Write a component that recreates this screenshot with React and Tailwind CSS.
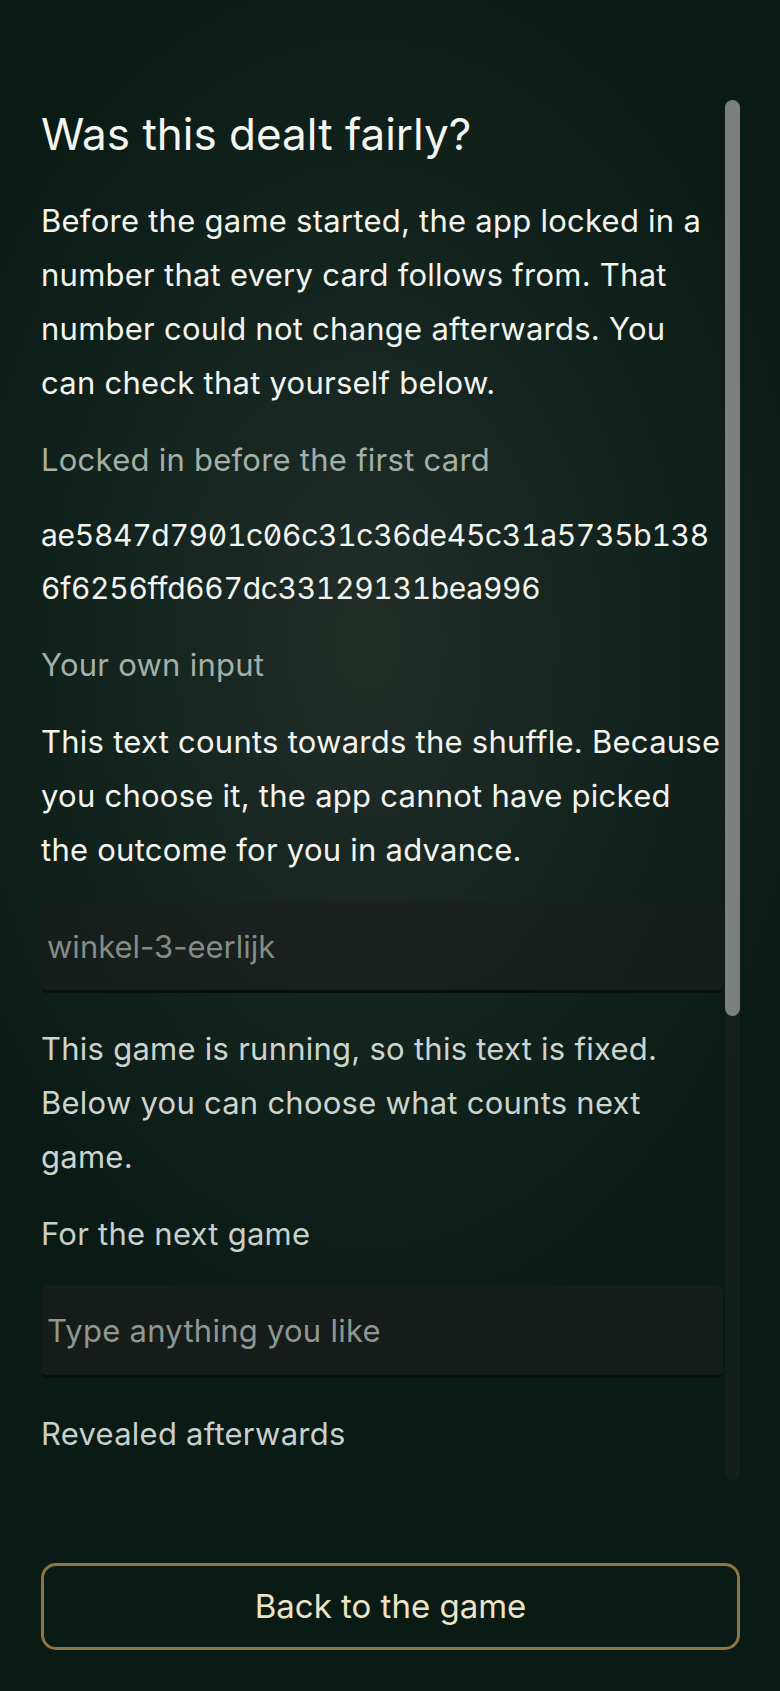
import { useState } from 'react';

const COMMIT = 'ae5847d7901c06c31c36de45c31a5735b1386f6256ffd667dc33129131bea996';

// body copy is a touch wider than plain Inter 30px
const body = 'text-[31px] tracking-[0.25px] leading-[54px]';

export default function App() {
  const [nextSeed, setNextSeed] = useState('');

  return (
    <div className="min-h-screen w-full bg-[#08190f] bg-[radial-gradient(ellipse_60%_42%_at_47%_38%,#232d28_0%,#152520_45%,#0a1a14_100%)] font-['Inter','Noto_Sans',sans-serif] antialiased">
      <div className="pt-[100px] pl-[41px] pr-[40px]">
        <div className="flex h-[1380px] gap-[2px]">
          <div className="flex-1 overflow-hidden">
            <h1 className="mt-[8px] text-[44px] leading-[53px] font-normal text-[#f4f5f0]">Was this dealt fairly?</h1>

            <p className={`mt-[33px] ${body} text-[#f3f4ef]`}>
              Before the game started, the app locked in a number that every card follows from. That number could not change afterwards. You can check that yourself below.
            </p>

            <Label className="mt-[23px]">Locked in before the first card</Label>
            <div className="mt-[22px] max-w-[672px] text-[30px] leading-[53px] tracking-[-0.3px] text-[#f3f4ef] break-all tabular-nums slashed-zero [font-feature-settings:'zero','tnum']">
              {COMMIT}
            </div>

            <Label className="mt-[23px]">Your own input</Label>
            <p className={`mt-[23px] ${body} text-[#f3f4ef]`}>
              This text counts towards the shuffle. Because you choose it, the app cannot have picked the outcome for you in advance.
            </p>

            <input
              readOnly
              value="winkel-3-eerlijk"
              className="mt-[25px] block h-[91px] w-full rounded-[6px] border-b-[3px] border-[#0b100d] bg-[rgba(30,30,30,0.55)] pl-[6px] text-[31px] text-[#838d88] outline-none"
            />

            <p className={`mt-[29px] max-w-[640px] ${body} text-[#cdd4cf]`}>
              This game is running, so this text is fixed. Below you can choose what counts next game.
            </p>

            <div className={`mt-[23px] ${body} text-[#c8d0cb]`}>For the next game</div>
            <input
              value={nextSeed}
              onChange={(e) => setNextSeed(e.target.value)}
              placeholder="Type anything you like"
              className="mt-[24px] block h-[93px] w-full rounded-[6px] border-b-[3px] border-[#0b0e0c] bg-[rgba(30,30,30,0.6)] pl-[6px] text-[31px] tracking-[0.25px] text-[#e6e9e6] placeholder:text-[#8e9792] outline-none"
            />

            <div className={`mt-[29px] ${body} text-[#c8d0cb]`}>Revealed afterwards</div>
          </div>

          {/* scrollbar */}
          <div className="w-[15px] shrink-0 rounded-full bg-[rgba(40,40,40,0.35)]">
            <div className="h-[916px] w-full rounded-full bg-[#7b807d]" />
          </div>
        </div>

        <button className="mt-[83px] block h-[87px] w-full rounded-[15px] border-[3px] border-[#8e7443] text-[33px] text-[#ece4c6]">
          Back to the game
        </button>
      </div>
    </div>
  );
}

function Label({ children, className = '' }) {
  return <div className={`${body} text-[#a5afa9] ${className}`}>{children}</div>;
}
